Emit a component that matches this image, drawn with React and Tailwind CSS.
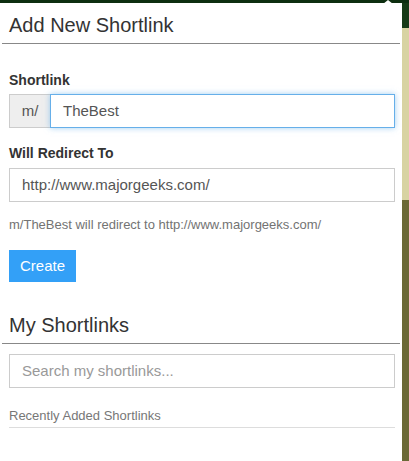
import React from 'react';

const font = { fontFamily: '"Liberation Sans", Arial, sans-serif' };

export default function App() {
  return (
    <div className="relative w-[409px] h-[461px] flex flex-col overflow-hidden bg-white" style={font}>
      <div className="h-[3px] bg-[#0d2e10] shrink-0" />
      <div className="absolute top-0 left-[383px] w-0 h-0 border-l-[5px] border-r-[5px] border-b-[4px] border-l-transparent border-r-transparent border-b-white" />
      <div className="flex flex-1">
        <div className="w-[402px] bg-white flex flex-col">
          <h1 className="px-[9px] pt-[10px] text-[20px] leading-[24px] text-[#333]">Add New Shortlink</h1>
          <div className="mx-[2px] mt-[6px] h-px bg-[#888]" />

          <div className="px-[9px] pt-[28px]">
            <label className="block text-[14px] leading-[16px] font-bold text-[#333]">Shortlink</label>
            <div className="mt-[6px] flex h-[34px] w-[386px]">
              <span className="w-[41px] flex items-center justify-center bg-[#eee] border border-[#ccc] border-r-0 text-[15px] text-[#555]">m/</span>
              <div className="flex-1 flex items-center px-[12px] border border-[#66afe9] shadow-[0_0_6px_rgba(102,175,233,0.6)] text-[15px] text-[#555]">TheBest</div>
            </div>

            <label className="block mt-[17px] text-[14px] leading-[16px] font-bold text-[#333]">Will Redirect To</label>
            <div className="mt-[7px] flex items-center h-[34px] w-[386px] px-[12px] border border-[#ccc] text-[15px] text-[#555]">http://www.majorgeeks.com/</div>

            <p className="mt-[15px] text-[13px] leading-[16px] text-[#737373]">m/TheBest will redirect to http://www.majorgeeks.com/</p>

            <button className="mt-[17px] h-[32px] w-[67px] bg-[#33a0f7] text-white text-[15px]">Create</button>
          </div>

          <h2 className="px-[9px] pt-[31px] text-[20px] leading-[24px] text-[#333]">My Shortlinks</h2>
          <div className="mx-[2px] mt-[6px] h-px bg-[#888]" />

          <div className="px-[9px] pt-[10px]">
            <div className="flex items-center h-[34px] w-[386px] px-[12px] border border-[#ccc] text-[15px] text-[#999]">Search my shortlinks...</div>
            <div className="mt-[20px] w-[386px] pb-[3px] border-b border-[#ddd] text-[13px] leading-[16px] text-[#777]">Recently Added Shortlinks</div>
          </div>
        </div>
        <div className="flex-1 flex flex-col">
          <div className="h-[25px] bg-[#163a16]" />
          <div className="h-[172px] bg-[#d8d3a2]" />
          <div className="flex-1 bg-[#6b6936]" />
        </div>
      </div>
    </div>
  );
}
